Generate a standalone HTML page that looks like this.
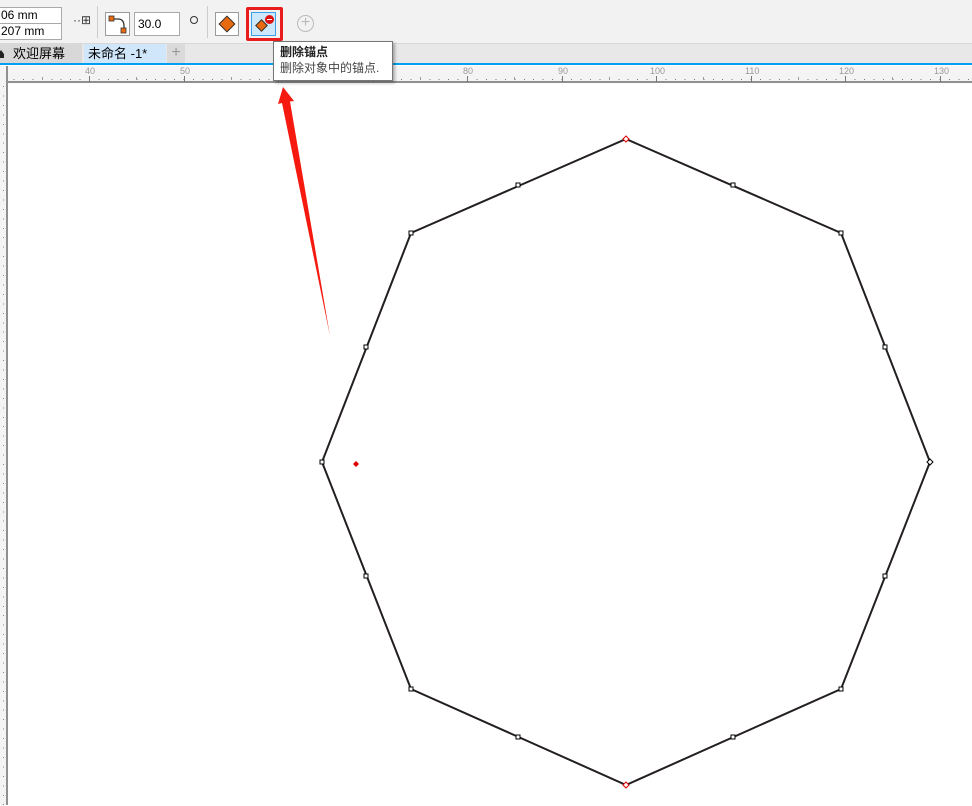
<!DOCTYPE html>
<html><head><meta charset="utf-8"><style>
*{margin:0;padding:0;box-sizing:border-box}
body{width:972px;height:805px;overflow:hidden;background:#fff;font-family:"Liberation Sans","Noto Sans CJK SC",sans-serif;position:relative}
.tb{position:absolute;left:0;top:0;width:972px;height:44px;background:#f2f2f2;border-bottom:1px solid #d8d8d8}
.inp{position:absolute;background:#fff;border:1px solid #aaa;font-size:12px;color:#000;padding-left:2px;line-height:14px}
.btn{position:absolute;border:1px solid #9a9a9a;background:#fff}
.tabs{position:absolute;left:0;top:44px;width:972px;height:21px;background:#e8e8e8;border-bottom:2px solid #00a0f0}
.ruler{position:absolute;left:0;top:66px;width:972px;height:17px;background:#f4f4f4;border-bottom:2px solid #909090}
.lr{position:absolute;left:0;top:66px;width:8px;height:739px;background:#f4f4f4;border-right:2px solid #909090}
.rl{position:absolute;top:66px;font-size:9px;color:#999}
</style></head><body>
<div class="tb">
 <div class="inp" style="left:-2px;top:7px;width:64px;height:17px">06 mm</div>
 <div class="inp" style="left:-2px;top:23px;width:64px;height:17px">207 mm</div>
 <div style="position:absolute;left:73px;top:13px;font-size:12px;color:#333">··⊞</div>
 <div style="position:absolute;left:97px;top:6px;width:1px;height:32px;background:#ccc"></div>
 <div class="btn" style="left:105px;top:12px;width:25px;height:24px">
  <svg width="23" height="22"><path d="M5 6 H12 Q18 6 18 13 V18" stroke="#333" fill="none" stroke-width="1.3"/><rect x="3" y="3" width="5" height="5" fill="#e86a10" stroke="#333" stroke-width=".8"/><rect x="15" y="15" width="5" height="5" fill="#e86a10" stroke="#333" stroke-width=".8"/></svg>
 </div>
 <div class="inp" style="left:134px;top:12px;width:46px;height:24px;line-height:22px;padding-left:3px">30.0</div>
 <div style="position:absolute;left:190px;top:16px;width:8px;height:8px;border:1.3px solid #333;border-radius:50%"></div>
 <div style="position:absolute;left:207px;top:6px;width:1px;height:32px;background:#ccc"></div>
 <div class="btn" style="left:215px;top:12px;width:24px;height:24px"><div style="position:absolute;left:5px;top:5px;width:12px;height:12px;background:#e86a10;border:1px solid #333;transform:rotate(45deg)"></div></div>
 <div style="position:absolute;left:246px;top:7px;width:37px;height:34px;border:3px solid #e81c1c;border-radius:2px"></div>
 <div style="position:absolute;left:251px;top:12px;width:25px;height:24px;background:#cde8fb;border:1px solid #3a9ee8">
  <div style="position:absolute;left:5px;top:8px;width:9px;height:9px;background:#e86a10;border:1px solid #333;transform:rotate(45deg)"></div>
  <div style="position:absolute;left:13px;top:2px;width:9px;height:9px;background:#e01010;border-radius:50%"><div style="position:absolute;left:2px;top:4px;width:5px;height:1.3px;background:#fff"></div></div>
 </div>
 <div style="position:absolute;left:297px;top:15px;width:17px;height:17px;border:1.5px solid #bbb;border-radius:50%;color:#bbb;font-size:16px;line-height:13px;text-align:center">+</div>
</div>
<div class="tabs">
 <div style="position:absolute;left:0;top:0;width:82px;height:19px;background:#d8d8d8;font-size:13px;line-height:19px;padding-left:13px">欢迎屏幕</div>
 <div style="position:absolute;left:-2px;top:6px;width:6px;height:8px;background:#222;clip-path:polygon(50% 0,100% 50%,100% 100%,0 100%,0 50%)"></div>
 <div style="position:absolute;left:84px;top:0;width:82px;height:19px;background:#cfe6fb;font-size:13px;line-height:19px;padding-left:4px">未命名 -1*</div>
 <div style="position:absolute;left:167px;top:0;width:18px;height:19px;background:#dadada;color:#999;font-size:16px;line-height:18px;text-align:center">+</div>
</div>
<div class="ruler"></div>
<div style="position:absolute;left:0;top:79px;width:972px;height:1px;background-image:repeating-linear-gradient(90deg,#777 0 1px,transparent 1px 9.45px);background-position:4px 0"></div>
<svg style="position:absolute;left:0;top:66px" width="972" height="17">
 <g stroke="#777" stroke-width="1">
  <path d="M89.5 10V16M184.5 10V16M278.5 10V16M373.5 10V16M467.5 10V16M562.5 10V16M656.5 10V16M751.5 10V16M845.5 10V16M940.5 10V16"/>
  <path d="M42.5 11V14M136.5 11V14M231.5 11V14M325.5 11V14M420.5 11V14M514.5 11V14M609.5 11V14M703.5 11V14M798.5 11V14M892.5 11V14" stroke="#999"/>
 </g>
</svg>
<div class="rl" style="left:85px">40</div><div class="rl" style="left:180px">50</div>
<div class="rl" style="left:463px">80</div><div class="rl" style="left:558px">90</div><div class="rl" style="left:650px">100</div><div class="rl" style="left:745px">110</div><div class="rl" style="left:839px">120</div><div class="rl" style="left:934px">130</div>
<div class="lr"></div>
<div style="position:absolute;left:3px;top:86px;width:1px;height:720px;background-image:repeating-linear-gradient(180deg,#888 0 1px,transparent 1px 9.45px)"></div>
<svg style="position:absolute;left:0;top:0" width="972" height="805">
 <polygon points="626,139 841,233 930,462 841,689 626,785 411,689 322,462 411,233" fill="none" stroke="#231f20" stroke-width="2"/>
 <g fill="#fff" stroke="#000" stroke-width="1">
  <rect x="409" y="231" width="4" height="4"/><rect x="839" y="231" width="4" height="4"/><rect x="839" y="687" width="4" height="4"/><rect x="409" y="687" width="4" height="4"/><rect x="320" y="460" width="4" height="4"/>
  <rect x="516" y="183" width="4" height="4"/><rect x="731" y="183" width="4" height="4"/><rect x="883" y="345" width="4" height="4"/><rect x="883" y="574" width="4" height="4"/><rect x="731" y="735" width="4" height="4"/><rect x="516" y="735" width="4" height="4"/><rect x="364" y="574" width="4" height="4"/><rect x="364" y="345" width="4" height="4"/>
  <path d="M930 459 L933 462 L930 465 L927 462Z"/>
 </g>
 <path d="M626 136 L629 139 L626 142 L623 139Z M626 782 L629 785 L626 788 L623 785Z" fill="#fff" stroke="#d00" stroke-width="1"/>
 <path d="M356 461 L359 464 L356 467 L353 464Z" fill="#d00"/>
 <path d="M283 87 L294 101 L290 101.5 L330 336 L282 103 L278 104Z" fill="#f5190f"/>
</svg>
<div style="position:absolute;left:273px;top:41px;width:120px;height:40px;background:#fff;border:1px solid #767676;box-shadow:2px 2px 3px rgba(0,0,0,.3);font-size:12px;padding:2px 0 0 6px;line-height:16px">
 <b style="color:#222">删除锚点</b><br><span style="color:#444">删除对象中的锚点.</span>
</div>
</body></html>
